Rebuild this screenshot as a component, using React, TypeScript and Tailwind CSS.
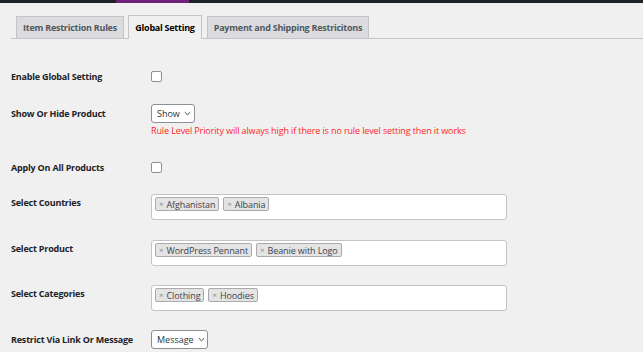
import React from "react";

const font = { fontFamily: '"Open Sans", "Noto Sans", sans-serif' };

function Chip({ text }: { text: string }) {
  return (
    <span className="flex items-center h-[14px] px-[3px] border border-[#aaa] rounded-[2px] bg-[#e4e4e4] text-[9px] leading-none text-[#3c434a] tracking-[-0.1px]">
      <span className="text-[8px] text-[#888] mr-[3px]">×</span>
      {text}
    </span>
  );
}

function MultiBox({ items }: { items: string[] }) {
  return (
    <div className="w-[356px] h-[26px] bg-white border border-[#c3c4c7] rounded-[3px] pt-[2px] pl-[3px] flex items-start gap-[4px]">
      {items.map((t) => (
        <Chip key={t} text={t} />
      ))}
    </div>
  );
}

function Select({ text, w }: { text: string; w: string }) {
  return (
    <div className={`${w} h-[19px] bg-white border border-[#8c8f94] rounded-[3px] flex items-center pl-[5px] text-[9px] text-[#2c3338]`}>
      <span>{text}</span>
      <svg className="ml-[4px]" width="7" height="5" viewBox="0 0 7 5" fill="none">
        <path d="M0.8 1.2 L3.5 3.8 L6.2 1.2" stroke="#3c434a" strokeWidth="1" />
      </svg>
    </div>
  );
}

function Checkbox() {
  return <div className="w-[11px] h-[11px] bg-white border border-[#8c8f94] rounded-[2px]" />;
}

const labelCls = "w-[140px] shrink-0 text-[9px] font-bold text-[#1d2327] tracking-[-0.2px] whitespace-nowrap";
const tabCls = "whitespace-nowrap justify-center flex items-center border border-b-0 border-[#c3c4c7] text-[9px] font-bold tracking-[-0.25px]";

export default function App() {
  return (
    <div className="w-[643px] h-[352px] bg-[#f0f0f1] overflow-hidden" style={font}>
      <div className="h-[3px] bg-[#1d2327] flex">
        <div className="ml-[116px] w-[73px] bg-[#72217a]" />
      </div>
      <div className="pl-[11px]">
        <div className="mt-[12px] flex items-end border-b border-[#c3c4c7] h-[24px] pl-[5px]">
          <div className={`${tabCls} w-[108px] h-[22px] bg-[#dcdcde] text-[#50575e]`}>
            Item Restriction Rules
          </div>
          <div className={`${tabCls} w-[74px] ml-[4px] h-[24px] -mb-px bg-[#f0f0f1] text-black`}>
            Global Setting
          </div>
          <div className={`${tabCls} w-[162px] ml-[5px] h-[22px] bg-[#dcdcde] text-[#50575e]`}>
            Payment and Shipping Restricitons
          </div>
        </div>

        <div className="mt-[32px] flex items-center h-[11px]">
          <div className={labelCls}>Enable Global Setting</div>
          <Checkbox />
        </div>

        <div className="mt-[22px] flex items-start">
          <div className={`${labelCls} h-[19px] flex items-center`}>Show Or Hide Product</div>
          <div>
            <Select text="Show" w="w-[44px]" />
            <div className="mt-[2px] text-[9px] leading-[12px] text-[#ff1f1f] tracking-[-0.12px] whitespace-nowrap">
              Rule Level Priority will always high if there is no rule level setting then it works
            </div>
          </div>
        </div>

        <div className="mt-[25px] flex items-center h-[11px]">
          <div className={labelCls}>Apply On All Products</div>
          <Checkbox />
        </div>

        <div className="mt-[21px] flex items-start">
          <div className={`${labelCls} mt-[2px] leading-[14px]`}>Select Countries</div>
          <MultiBox items={["Afghanistan", "Albania"]} />
        </div>

        <div className="mt-[20px] flex items-start">
          <div className={`${labelCls} mt-[2px] leading-[14px]`}>Select Product</div>
          <MultiBox items={["WordPress Pennant", "Beanie with Logo"]} />
        </div>

        <div className="mt-[19px] flex items-start">
          <div className={`${labelCls} mt-[2px] leading-[14px]`}>Select Categories</div>
          <MultiBox items={["Clothing", "Hoodies"]} />
        </div>

        <div className="mt-[19px] flex items-center">
          <div className={labelCls}>Restrict Via Link Or Message</div>
          <Select text="Message" w="w-[57px]" />
        </div>
      </div>
    </div>
  );
}
